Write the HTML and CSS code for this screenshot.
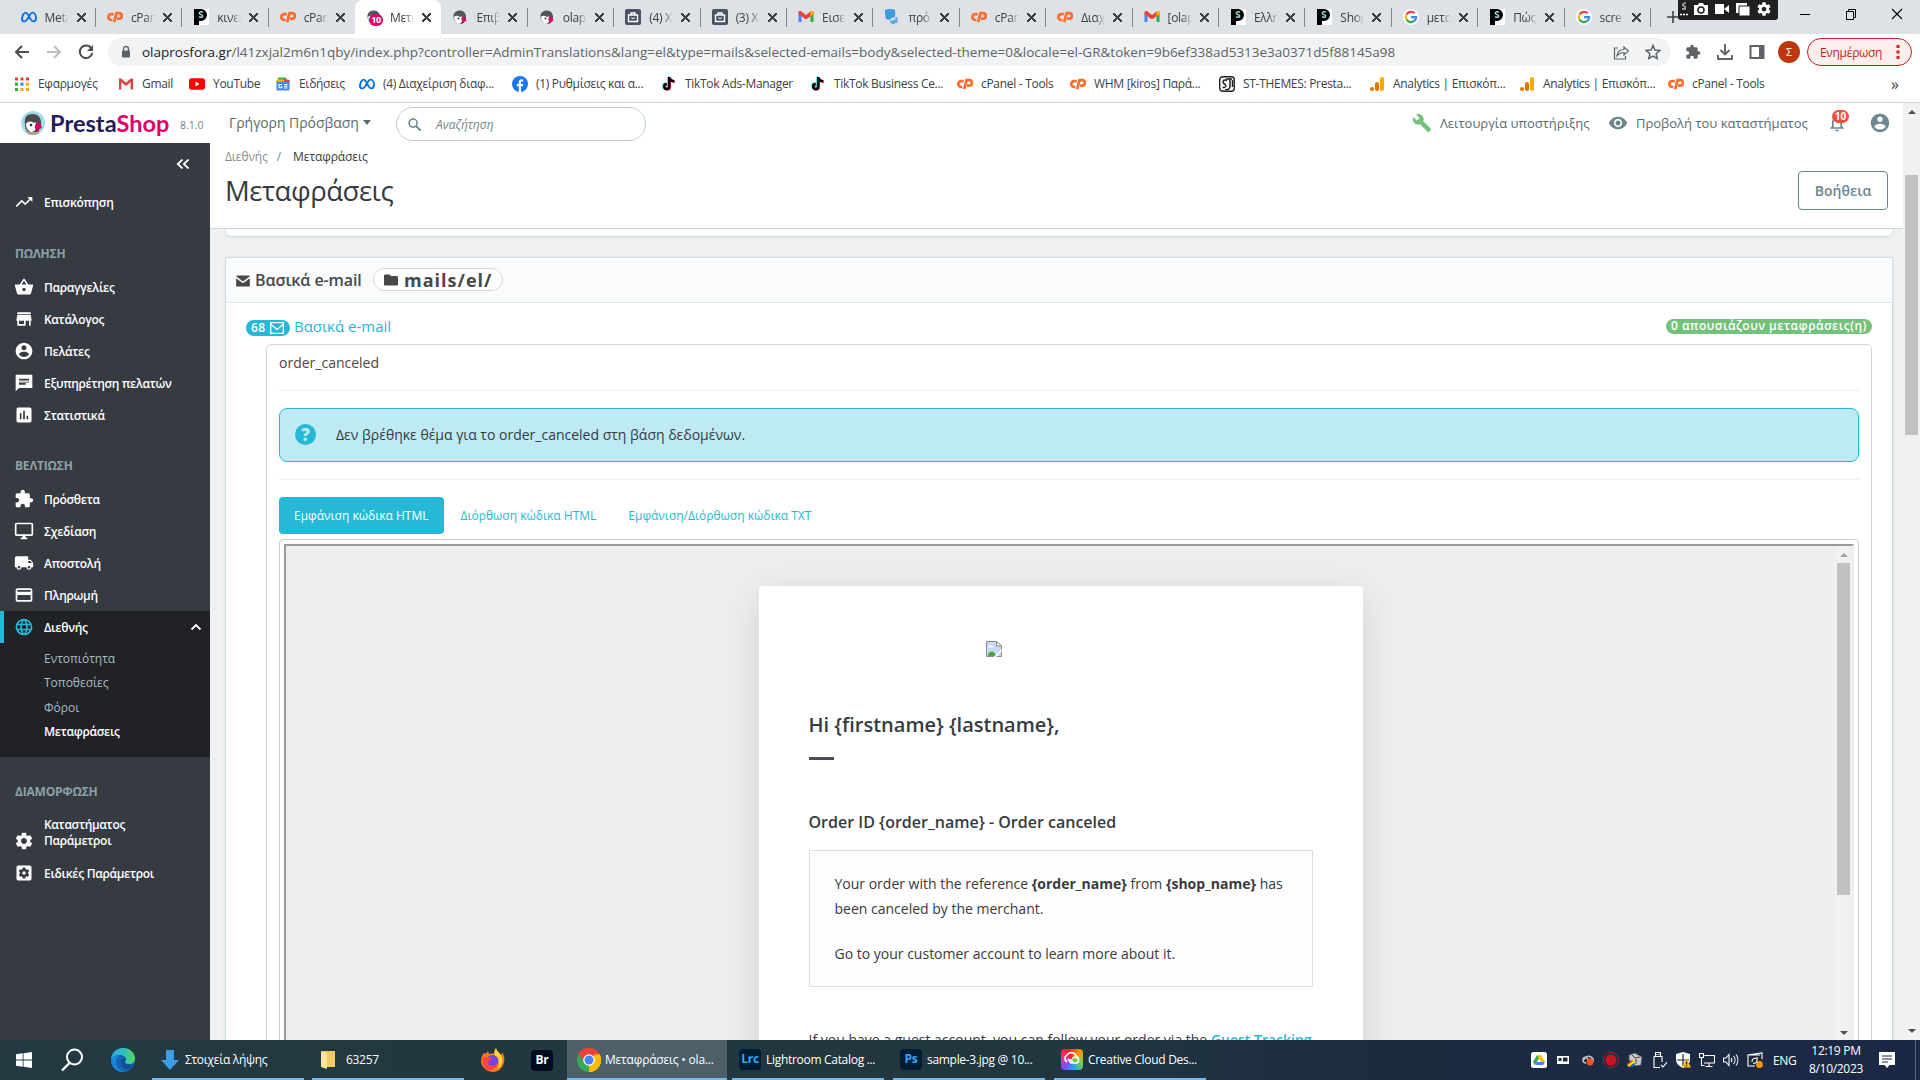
FILE: index.html
```html
<!DOCTYPE html>
<html lang="el">
<head>
  <meta charset="utf-8" />
  <title>Μεταφράσεις • olaprosfora</title>
  <link rel="stylesheet" href="styles.css">
</head>
<body>
  <!-- icon sprite -->
  <svg class="sprite" width="0" height="0">
    <symbol id="i-meta" viewBox="0 0 16 16"><path d="M1 10.5C1 7 2.6 3.6 4.7 3.6c3 0 4 8.8 7.6 8.8 1.8 0 2.7-1.3 2.7-3.3 0-3-1.500-5.500-3.500-5.500C8.200 3.600 7.300 12.400 3.200 12.400 1.700 12.400 1 11.500 1 10.500z" fill="none" stroke="#0a72ea" stroke-width="1.900"/></symbol>
    <symbol id="i-cp" viewBox="0 0 16 16"><path d="M6.800 5.200H4.200a2.900 2.900 0 0 0 0 5.800H5.400M7.200 13.200L9.500 4.200h2.700a2.700 2.700 0 0 1 0 5.400H10" fill="none" stroke="#ff6c2c" stroke-width="2.700"/></symbol>
    <symbol id="i-p" viewBox="0 0 16 16"><path d="M1 0h15v16H1z" fill="#fff"/><path d="M1 0h7a6 6 0 0 1 0 12H6v4H1z" fill="#000"/><path d="M10 3.200C8 2 6 3 6.300 4.400c.4 1.500 3.200 1 3.300 2.600.1 1.500-2.200 1.800-3.600.7" fill="none" stroke="#9fdfe8" stroke-width="1.500"/></symbol>
    <symbol id="i-presta" viewBox="0 0 24 24"><circle cx="12" cy="12" r="12" fill="#a4dbe8"/><path d="M5 20h14l-2 3a12 12 0 0 1-10 0z" fill="#b3a08c"/><path d="M4 13C3 6 6 3 12 3s9 5 8 13l-3 5H8c-3-1-4-4-4-8z" fill="#4b4a4d"/><path d="M5 13c2-3 5-3 8-1 2-1 3 0 3 2-1 5-3 7-6 7-3-1-5-4-5-8z" fill="#fff"/><circle cx="10" cy="14" r="1.300" fill="#333"/><path d="M15 12c3-1 5 1 6 5l-3 1-2 2c-2-2-3-4-1-8z" fill="#df0067"/></symbol>
    <symbol id="i-bird" viewBox="0 0 16 16"><path d="M1.500 8C1 4 4 1.500 8 1.500s6 3 6 7c0 3-2 6-5 6.500-4 0-7-3-7.500-7z" fill="#555458"/><path d="M2 8c2-2 4-1 6 0 2-1 3 0 3 2-1 2-2 5-4 5-3-1-5-4-5-7z" fill="#fff"/><circle cx="6.500" cy="9.500" r="1" fill="#333"/><path d="M10 8c2-1 4 1 4.500 3.500l-2 1L11 14c-1.500-2-2-4-1-6z" fill="#df0067"/></symbol>
    <symbol id="i-case" viewBox="0 0 16 16"><rect width="16" height="16" rx="2" fill="#4a5263"/><path d="M3.500 6h9v6.500h-9zM6 6V4h4v2" fill="none" stroke="#fff" stroke-width="1.400"/><path d="M6 8.500c1 1.300 3 1.300 4 0" fill="none" stroke="#fff"/></symbol>
    <symbol id="i-gmail" viewBox="0 0 16 16"><path d="M.5 3.500V13h3V7z" fill="#4285f4"/><path d="M15.500 3.500V13h-3V7z" fill="#34a853"/><path d="M.5 3.500C.5 2 2.500 1.700 3.500 2.500L8 6l4.500-3.500c1-.8 3-.5 3 1V5L8 10.500.5 5z" fill="#ea4335"/><path d="M12.500 2.500c1-.8 3-.5 3 1V5l-3 2.200z" fill="#fbbc04"/></symbol>
    <symbol id="i-gmail-old" viewBox="0 0 16 16"><path d="M1 2.500h14v11H1z" fill="#f2f2f2"/><path d="M1 2.500h2l5 4.300 5-4.300h2v11h-2.300V6L8 10 3.300 6v7.500H1z" fill="#d9453a"/></symbol>
    <symbol id="i-mastodon" viewBox="0 0 16 16"><path d="M1 1c3-1.300 8-1.300 10 0 .6 3 .3 6-.3 7-.8.800-2.700.900-3.700 1v1.500c-1 .2-4.400.2-5-.8C1.200 7.500.8 4 1 1z" fill="#3f9ae0"/><path d="M5 11.500c3 .5 5-.3 6.500-1.500V8h2v6l-1.500-.5C11 15 9 16 8 15" fill="#5fa9e0"/></symbol>
    <symbol id="i-google" viewBox="0 0 16 16"><circle cx="8" cy="8" r="8" fill="#fff"/><path d="M3.500 5.500A5.100 5.100 0 0 1 11.700 4.300" fill="none" stroke="#ea4335" stroke-width="2.200"/><path d="M3.500 5.500a5.200 5.200 0 0 0 0 5" fill="none" stroke="#fbbc04" stroke-width="2.200"/><path d="M3.500 10.500a5.100 5.100 0 0 0 7.900 1.300" fill="none" stroke="#34a853" stroke-width="2.200"/><path d="M8 8.200h5.100c0 1.500-.6 2.700-1.700 3.600" fill="none" stroke="#4285f4" stroke-width="2.200"/></symbol>
    <symbol id="i-apps" viewBox="0 0 16 16"><path d="M1 1.500h3v3H1zM6.500 1.500h3v3h-3zM12 1.500h3v3h-3z" fill="#e33e2b"/><path d="M1 6.700h3v3H1z" fill="#2da94f"/><path d="M6.500 6.700h3v3h-3z" fill="#3b80ee"/><path d="M12 6.700h3v3h-3zM6.500 12h3v3h-3zM12 12h3v3h-3z" fill="#f5a911"/><path d="M1 12h3v3H1z" fill="#2da94f"/></symbol>
    <symbol id="i-yt" viewBox="0 0 16 16"><rect y="2.300" width="16" height="11.400" rx="2.600" fill="#f00"/><path d="M6.500 5.500v5l4-2.500z" fill="#fff"/></symbol>
    <symbol id="i-news" viewBox="0 0 16 16"><path d="M3 1.500h8l1 5H3z" fill="#34a853"/><path d="M9 3l6 1-1 4H9z" fill="#ea4335"/><path d="M1 3.500h8v3H1z" fill="#fbbc04"/><rect x="1.500" y="5.500" width="13" height="9" rx="1" fill="#4285f4"/><path d="M7 8.600H4v3.200h2.800v-1.500M9 8.500h3.500M9 10.300h3.500M9 12h3.500" fill="none" stroke="#fff" stroke-width="1.100"/></symbol>
    <symbol id="i-fb" viewBox="0 0 16 16"><circle cx="8" cy="8" r="8" fill="#1877f2"/><path d="M6.800 16v-5.800H4.900V7.900h1.900V6.300c0-2 1.100-3 2.800-3l1.600.1v2h-1c-1 0-1.200.5-1.200 1.200v1.300h2.200l-.4 2.300H9V16z" fill="#fff"/></symbol>
    <symbol id="i-tiktok" viewBox="0 0 16 16"><path d="M8 1v9.500A2.500 2.500 0 1 1 5.500 8M8 1.500C8.500 4 10.500 5 13 5.200" fill="none" stroke="#25f4ee" stroke-width="2.400" transform="translate(-.7 -.5)"/><path d="M8.500 1v9.500A2.500 2.500 0 1 1 6 8M8.500 1.500C9 4 11 5 13.500 5.200" fill="none" stroke="#fe2c55" stroke-width="2.400" transform="translate(.4 .6)"/><path d="M8.200 1v9.500A2.500 2.500 0 1 1 5.700 8M8.200 1.500C8.700 4 10.700 5 13.200 5.200" fill="none" stroke="#000" stroke-width="2.400"/></symbol>
    <symbol id="i-st" viewBox="0 0 16 16"><rect x=".7" y=".7" width="14.600" height="14.600" rx="3" fill="#fff" stroke="#222" stroke-width="1.400"/><path d="M8 4.500C4 3 3 6.500 5.500 8s1.500 4-2 3.500M7 3h6M11 3v7c0 3-2 4-5 3.500M13.500 4v7" fill="none" stroke="#222" stroke-width="1.500"/></symbol>
    <symbol id="i-analytics" viewBox="0 0 16 16"><rect x="11" y="1" width="4" height="14" rx="2" fill="#f9ab00"/><rect x="6" y="6" width="4" height="9" rx="2" fill="#e37400"/><circle cx="3" cy="13" r="2" fill="#e37400"/></symbol>
    <symbol id="i-mail" viewBox="0 0 16 14"><path d="M0 1.500C0 .7.700.5 1.300.5h13.400c.8 0 1.300.4 1.300 1L8.700 7c-.5.400-.9.400-1.400 0zM0 3.700l6.600 5c.9.700 1.900.7 2.800 0l6.600-5v8.800c0 .7-.5 1-1.200 1H1.200c-.7 0-1.200-.3-1.200-1z" fill="currentColor"/></symbol>

    <symbol id="m-trend" viewBox="0 0 24 24"><path d="M16 6l2.290 2.290-4.880 4.880-4-4L2 16.590 3.410 18l6-6 4 4 6.300-6.290L22 12V6z"/></symbol>
    <symbol id="m-basket" viewBox="0 0 24 24"><path d="M17.210 9l-4.380-6.560c-.19-.28-.51-.42-.83-.42s-.64.140-.83.430L6.790 9H2c-.55 0-1 .45-1 1 0 .09.010.18.040.27l2.540 9.270c.23.840 1 1.460 1.920 1.460h13c.92 0 1.690-.62 1.930-1.460l2.540-9.270L23 10c0-.55-.45-1-1-1h-4.790zM9 9l3-4.400L15 9H9zm3 8c-1.100 0-2-.9-2-2s.9-2 2-2 2 .9 2 2-.9 2-2 2z"/></symbol>
    <symbol id="m-store" viewBox="0 0 24 24"><path d="M20 4H4v2h16V4zm1 10v-2l-1-5H4l-1 5v2h1v6h10v-6h4v6h2v-6h1zm-9 4H6v-4h6v4z"/></symbol>
    <symbol id="m-account" viewBox="0 0 24 24"><path d="M12 2C6.480 2 2 6.480 2 12s4.480 10 10 10 10-4.480 10-10S17.520 2 12 2zm0 3c1.660 0 3 1.340 3 3s-1.340 3-3 3-3-1.340-3-3 1.340-3 3-3zm0 14.200c-2.500 0-4.710-1.280-6-3.220.03-1.990 4-3.080 6-3.080 1.990 0 5.970 1.090 6 3.080-1.290 1.940-3.500 3.220-6 3.220z"/></symbol>
    <symbol id="m-chat" viewBox="0 0 24 24"><path d="M22 2H2v20l4-4h16V2zM6 7h12v2H6V7zm8 7H6v-2h8v2zm4-2.500H6v-1h12v1z"/></symbol>
    <symbol id="m-stats" viewBox="0 0 24 24"><path d="M19 3H5c-1.100 0-2 .9-2 2v14c0 1.100.9 2 2 2h14c1.100 0 2-.9 2-2V5c0-1.100-.9-2-2-2zM9 17H7v-7h2v7zm4 0h-2V7h2v10zm4 0h-2v-4h2v4z"/></symbol>
    <symbol id="m-ext" viewBox="0 0 24 24"><path d="M20.500 11H19V7c0-1.100-.9-2-2-2h-4V3.500C13 2.120 11.880 1 10.500 1S8 2.120 8 3.500V5H4c-1.100 0-1.990.9-1.990 2v3.800H3.500c1.490 0 2.700 1.210 2.700 2.700s-1.210 2.700-2.700 2.700H2V20c0 1.100.9 2 2 2h3.800v-1.500c0-1.490 1.210-2.700 2.700-2.700 1.490 0 2.700 1.210 2.700 2.700V22H17c1.100 0 2-.9 2-2v-4h1.500c1.380 0 2.500-1.120 2.500-2.500S21.880 11 20.500 11z"/></symbol>
    <symbol id="m-desktop" viewBox="0 0 24 24"><path d="M21 2H3c-1.100 0-2 .9-2 2v12c0 1.100.9 2 2 2h7v2H8v2h8v-2h-2v-2h7c1.100 0 2-.9 2-2V4c0-1.100-.9-2-2-2zm0 14H3V4h18v12z"/></symbol>
    <symbol id="m-truck" viewBox="0 0 24 24"><path d="M20 8h-3V4H3c-1.100 0-2 .9-2 2v11h2c0 1.660 1.340 3 3 3s3-1.340 3-3h6c0 1.660 1.340 3 3 3s3-1.340 3-3h2v-5l-3-4zM6 18.500c-.83 0-1.500-.67-1.500-1.500s.67-1.500 1.500-1.500 1.500.67 1.500 1.500-.67 1.500-1.500 1.500zm13.500-9l1.960 2.500H17V9.500h2.500zm-1.500 9c-.83 0-1.500-.67-1.500-1.500s.67-1.500 1.500-1.500 1.500.67 1.500 1.500-.67 1.500-1.500 1.500z"/></symbol>
    <symbol id="m-card" viewBox="0 0 24 24"><path d="M20 4H4c-1.110 0-1.990.89-1.990 2L2 18c0 1.110.89 2 2 2h16c1.110 0 2-.89 2-2V6c0-1.110-.89-2-2-2zm0 14H4v-6h16v6zm0-10H4V6h16v2z"/></symbol>
    <symbol id="m-globe" viewBox="0 0 24 24"><path d="M11.990 2C6.470 2 2 6.480 2 12s4.470 10 9.990 10C17.520 22 22 17.520 22 12S17.520 2 11.990 2zm6.930 6h-2.950c-.32-1.250-.78-2.450-1.380-3.560 1.840.63 3.370 1.910 4.330 3.560zM12 4.040c.83 1.200 1.480 2.530 1.910 3.960h-3.820c.43-1.430 1.080-2.760 1.910-3.960zM4.260 14C4.100 13.360 4 12.690 4 12s.1-1.360.26-2h3.380c-.08.660-.14 1.320-.14 2 0 .68.060 1.340.14 2H4.260zm.82 2h2.950c.32 1.250.78 2.450 1.380 3.560-1.840-.63-3.370-1.900-4.330-3.560zm2.950-8H5.080c.96-1.660 2.490-2.930 4.330-3.560C8.810 5.550 8.350 6.750 8.030 8zM12 19.960c-.83-1.200-1.480-2.530-1.910-3.960h3.820c-.43 1.430-1.080 2.760-1.910 3.960zM14.340 14H9.660c-.09-.66-.16-1.320-.16-2 0-.68.070-1.350.16-2h4.680c.09.650.16 1.320.16 2 0 .68-.07 1.340-.16 2zm.25 5.560c.6-1.110 1.060-2.310 1.380-3.560h2.950c-.96 1.650-2.490 2.930-4.330 3.560zM16.360 14c.08-.66.140-1.320.14-2 0-.68-.06-1.340-.14-2h3.380c.16.640.26 1.310.26 2s-.1 1.360-.26 2h-3.380z"/></symbol>
    <symbol id="m-gear" viewBox="0 0 24 24"><path d="M19.430 12.980c.04-.32.07-.64.07-.98s-.03-.66-.07-.98l2.110-1.650c.19-.15.24-.42.12-.64l-2-3.460c-.12-.22-.39-.3-.61-.22l-2.490 1c-.52-.4-1.080-.73-1.690-.98l-.38-2.650C14.460 2.180 14.250 2 14 2h-4c-.25 0-.46.18-.49.42l-.38 2.650c-.61.25-1.170.59-1.690.98l-2.490-1c-.23-.09-.49 0-.61.22l-2 3.460c-.13.22-.07.49.12.64l2.110 1.650c-.04.32-.07.65-.07.98s.03.66.07.98l-2.110 1.650c-.19.150-.24.42-.12.640l2 3.460c.12.220.39.300.61.220l2.490-1c.52.400 1.080.730 1.690.980l.38 2.650c.03.240.24.420.49.420h4c.25 0 .46-.18.49-.42l.38-2.650c.61-.25 1.170-.59 1.690-.98l2.490 1c.23.090.49 0 .61-.22l2-3.460c.12-.22.07-.49-.12-.64l-2.110-1.650zM12 15.500c-1.930 0-3.500-1.570-3.500-3.500s1.570-3.500 3.500-3.500 3.500 1.570 3.500 3.500-1.570 3.500-3.500 3.500z"/></symbol>
    <symbol id="m-apps-gear" viewBox="0 0 24 24"><path fill-rule="evenodd" d="M5 3h14a2 2 0 0 1 2 2v14a2 2 0 0 1-2 2H5a2 2 0 0 1-2-2V5c0-1.100.9-2 2-2zM10.500 5.500l-.3 1.700-1.300.8-1.700-.6-1.500 2.500L7 11v2l-1.300 1.100 1.500 2.500 1.700-.6 1.300.8.300 1.700h3l.3-1.700 1.300-.8 1.700.6 1.500-2.500L17 13v-2l1.300-1.100-1.500-2.500-1.700.6-1.300-.8-.3-1.700zM12 10a2 2 0 1 1 0 4 2 2 0 0 1 0-4z"/></symbol>
    <symbol id="m-wrench" viewBox="0 0 24 24"><path d="M22.700 19l-9.100-9.100c.9-2.300.4-5-1.500-6.900-2-2-5-2.400-7.400-1.300L9 6 6 9 1.600 4.700C.4 7.100.9 10.100 2.900 12.100c1.900 1.900 4.600 2.400 6.900 1.500l9.100 9.100c.4.400 1 .4 1.400 0l2.300-2.300c.5-.4.500-1.100.1-1.400z"/></symbol>
    <symbol id="m-eye" viewBox="0 0 24 24"><path d="M12 4.500C7 4.500 2.730 7.610 1 12c1.730 4.390 6 7.500 11 7.500s9.270-3.110 11-7.500c-1.730-4.390-6-7.500-11-7.500zM12 17c-2.760 0-5-2.240-5-5s2.240-5 5-5 5 2.240 5 5-2.240 5-5 5zm0-8c-1.660 0-3 1.340-3 3s1.340 3 3 3 3-1.340 3-3-1.340-3-3-3z"/></symbol>
    <symbol id="m-bell" viewBox="0 0 24 24"><path d="M12 22c1.100 0 2-.9 2-2h-4c0 1.100.9 2 2 2zm6-6v-5c0-3.070-1.630-5.640-4.500-6.320V4c0-.83-.67-1.500-1.500-1.500s-1.500.67-1.500 1.500v.68C7.640 5.360 6 7.920 6 11v5l-2 2v1h16v-1l-2-2zm-2 1H8v-6c0-2.480 1.510-4.500 4-4.500s4 2.020 4 4.500v6z"/></symbol>
  </svg>

  <!-- browser tabs -->
  <div class="tabstrip">
    <div class="tab"><svg class="fav"><use href="#i-meta"/></svg><span>Meta</span><b></b></div>
    <div class="tab"><svg class="fav"><use href="#i-cp"/></svg><span>cPan</span><b></b></div>
    <div class="tab"><svg class="fav"><use href="#i-p"/></svg><span>κινεί</span><b></b></div>
    <div class="tab no-sep"><svg class="fav"><use href="#i-cp"/></svg><span>cPan</span><b></b></div>
    <div class="tab active"><svg class="fav"><use href="#i-bird"/></svg><i class="fav-count">10</i><span>Μετα</span><b></b></div>
    <div class="tab"><svg class="fav"><use href="#i-bird"/></svg><span>Επιβ</span><b></b></div>
    <div class="tab"><svg class="fav"><use href="#i-bird"/></svg><span>olap</span><b></b></div>
    <div class="tab"><svg class="fav"><use href="#i-case"/></svg><span>(4) X</span><b></b></div>
    <div class="tab"><svg class="fav"><use href="#i-case"/></svg><span>(3) X</span><b></b></div>
    <div class="tab"><svg class="fav"><use href="#i-gmail"/></svg><span>Εισε</span><b></b></div>
    <div class="tab"><svg class="fav"><use href="#i-mastodon"/></svg><span>πρό</span><b></b></div>
    <div class="tab"><svg class="fav"><use href="#i-cp"/></svg><span>cPan</span><b></b></div>
    <div class="tab"><svg class="fav"><use href="#i-cp"/></svg><span>Διαχ</span><b></b></div>
    <div class="tab"><svg class="fav"><use href="#i-gmail"/></svg><span>[olap</span><b></b></div>
    <div class="tab"><svg class="fav"><use href="#i-p"/></svg><span>Ελλη</span><b></b></div>
    <div class="tab"><svg class="fav"><use href="#i-p"/></svg><span>Shop</span><b></b></div>
    <div class="tab"><svg class="fav"><use href="#i-google"/></svg><span>μετα</span><b></b></div>
    <div class="tab"><svg class="fav"><use href="#i-p"/></svg><span>Πώς</span><b></b></div>
    <div class="tab"><svg class="fav"><use href="#i-google"/></svg><span>scre</span><b></b></div>
    <svg class="new-tab" viewBox="0 0 12 12"><path d="M6 0v12M0 6h12" stroke="#3c4043" stroke-width="1.600"/></svg>
    <div class="win-controls">
      <svg viewBox="0 0 12 12"><path d="M1 6.500h10" stroke="#000"/></svg>
      <svg viewBox="0 0 12 12"><path d="M1.500 3.500h7v8h-7zM3.500 3.500v-2h7v8h-2" fill="none" stroke="#000"/></svg>
      <svg viewBox="0 0 12 12"><path d="M1 1l10 10M11 1L1 11" stroke="#000" stroke-width="1.100"/></svg>
    </div>
  </div>
  <!-- screen recorder -->
  <div class="recorder">
    <svg class="grip" viewBox="0 0 8 16"><path d="M6 2c-4 0-4 3-2 3s2 3-2 3h4" stroke="#aaa" stroke-width="1.500" fill="none"/><path d="M0 13.500h2M3 13.500h2M6 13.500h2" stroke="#fff" stroke-width="1.500"/></svg>
    <svg viewBox="0 0 16 16"><path d="M1 4h4l1-2h4l1 2h4v10H1z" fill="#fff"/><circle cx="8" cy="9" r="3" fill="#fff" stroke="#222" stroke-width="1.500"/></svg>
    <svg viewBox="0 0 16 16"><path d="M1 3h9v10H1zM10 8l5-4v8z" fill="#fff"/></svg>
    <svg viewBox="0 0 16 16"><path d="M1 2h11v10H1z" fill="#fff"/><path d="M4 5h11v10H4z" fill="#fff" stroke="#222"/></svg>
    <svg viewBox="0 0 24 24" fill="#fff"><use href="#m-gear"/></svg>
  </div>

  <!-- address bar -->
  <div class="toolbar">
    <div class="nav-btns">
      <svg viewBox="0 0 16 16"><path d="M15 8H2M8 2L2 8l6 6" fill="none" stroke="#4a4d51" stroke-width="2"/></svg>
      <svg viewBox="0 0 16 16"><path d="M1 8h13M8 2l6 6-6 6" fill="none" stroke="#bbbdc0" stroke-width="2"/></svg>
      <svg viewBox="0 0 16 16"><path d="M13.500 4.500A6.300 6.300 0 1 0 14.300 9" fill="none" stroke="#4a4d51" stroke-width="2"/><path d="M15 1v6H9z" fill="#4a4d51"/></svg>
    </div>
    <div class="omnibox">
      <svg class="lock" viewBox="0 0 10 14"><path d="M2.500 6V4a2.500 2.500 0 0 1 5 0v2" fill="none" stroke="#5f6368" stroke-width="1.400"/><rect x="1" y="5.500" width="8" height="7" rx="1" fill="#5f6368"/></svg>
      <span class="url"><em>olaprosfora.gr</em>/l41zxjal2m6n1qby/index.php?controller=AdminTranslations&amp;lang=el&amp;type=mails&amp;selected-emails=body&amp;selected-theme=0&amp;locale=el-GR&amp;token=9b6ef338ad5313e3a0371d5f88145a98</span>
      <svg class="omni-ic" viewBox="0 0 16 16"><path d="M5 4H1.500v11h11v-3M4 11.500C5 7 8 5.500 11 5.500V3l4.500 4L11 11V8.500C8 8.500 6 9.500 4 11.500z" fill="none" stroke="#5f6368" stroke-width="1.200"/></svg>
      <svg class="omni-ic" viewBox="0 0 16 16"><path d="M8 1.500l1.900 4.600 4.900.4-3.700 3.200 1.100 4.800L8 12l-4.200 2.500 1.100-4.800L1.200 6.500l4.900-.4z" fill="none" stroke="#5f6368" stroke-width="1.500"/></svg>
    </div>
    <div class="tool-icons">
      <svg viewBox="0 0 24 24" fill="#5f6368"><use href="#m-ext"/></svg>
      <svg viewBox="0 0 16 16"><path d="M8 0v10M3.500 6L8 10.500 12.500 6M1 11v4h14v-4" fill="none" stroke="#5f6368" stroke-width="1.900"/></svg>
      <svg viewBox="0 0 16 16"><path d="M1.500 2h13v12h-13z" fill="none" stroke="#5f6368" stroke-width="2"/><path d="M10 2h5v12h-5z" fill="#5f6368"/></svg>
    </div>
    <span class="avatar">Σ</span>
    <span class="update-pill">Ενημέρωση<svg viewBox="0 0 4 14"><path d="M.5 0h3v3h-3zM.5 5.500h3v3h-3zM.5 11h3v3h-3z" fill="#c5221f"/></svg></span>
  </div>

  <!-- bookmarks -->
  <div class="bookmarks">
    <a><svg class="fav"><use href="#i-apps"/></svg>Εφαρμογές</a>
    <a><svg class="fav"><use href="#i-gmail-old"/></svg>Gmail</a>
    <a><svg class="fav"><use href="#i-yt"/></svg>YouTube</a>
    <a><svg class="fav"><use href="#i-news"/></svg>Ειδήσεις</a>
    <a><svg class="fav"><use href="#i-meta"/></svg>(4) Διαχείριση διαφ...</a>
    <a><svg class="fav"><use href="#i-fb"/></svg>(1) Ρυθμίσεις και α...</a>
    <a><svg class="fav"><use href="#i-tiktok"/></svg>TikTok Ads-Manager</a>
    <a><svg class="fav"><use href="#i-tiktok"/></svg>TikTok Business Ce...</a>
    <a><svg class="fav"><use href="#i-cp"/></svg>cPanel - Tools</a>
    <a><svg class="fav"><use href="#i-cp"/></svg>WHM [kiros] Παρά...</a>
    <a><svg class="fav"><use href="#i-st"/></svg>ST-THEMES: Presta...</a>
    <a><svg class="fav"><use href="#i-analytics"/></svg>Analytics | Επισκόπ...</a>
    <a><svg class="fav"><use href="#i-analytics"/></svg>Analytics | Επισκόπ...</a>
    <a><svg class="fav"><use href="#i-cp"/></svg>cPanel - Tools</a>
    <span class="more">»</span>
  </div>

  <div class="viewport">
    <div class="page">
      <header class="ps-header">
        <svg class="ps-logo"><use href="#i-presta"/></svg>
        <span class="ps-name">Presta<em>Shop</em></span>
        <span class="ps-version">8.1.0</span>
        <span class="quick">Γρήγορη Πρόσβαση</span>
        <div class="search">
          <svg viewBox="0 0 16 16"><circle cx="6.500" cy="6.500" r="4.300" fill="none" stroke="#6c868e" stroke-width="1.700"/><path d="M9.600 9.600l5 5" stroke="#6c868e" stroke-width="2"/></svg>
          <span>Αναζήτηση</span>
        </div>
        <div class="header-right">
          <svg class="wrench"><use href="#m-wrench"/></svg>
          <span class="debug">Λειτουργία υποστήριξης</span>
          <svg class="eye"><use href="#m-eye"/></svg>
          <span class="view-shop">Προβολή του καταστήματος</span>
          <div class="notif"><svg><use href="#m-bell"/></svg><b>10</b></div>
          <svg class="account"><use href="#m-account"/></svg>
        </div>
      </header>

      <div class="ps-body">
        <nav class="sidebar">
          <div class="collapse"><svg viewBox="0 0 14 10"><path d="M6.500.5L1.800 5l4.700 4.500M12.500.5L7.800 5l4.700 4.500" fill="none" stroke="#fff" stroke-width="1.800"/></svg></div>
          <a class="item first"><svg><use href="#m-trend"/></svg>Επισκόπηση</a>
          <h4>ΠΩΛΗΣΗ</h4>
          <a class="item"><svg><use href="#m-basket"/></svg>Παραγγελίες</a>
          <a class="item"><svg><use href="#m-store"/></svg>Κατάλογος</a>
          <a class="item"><svg><use href="#m-account"/></svg>Πελάτες</a>
          <a class="item"><svg><use href="#m-chat"/></svg>Εξυπηρέτηση πελατών</a>
          <a class="item"><svg><use href="#m-stats"/></svg>Στατιστικά</a>
          <h4>ΒΕΛΤΙΩΣΗ</h4>
          <a class="item"><svg><use href="#m-ext"/></svg>Πρόσθετα</a>
          <a class="item"><svg><use href="#m-desktop"/></svg>Σχεδίαση</a>
          <a class="item"><svg><use href="#m-truck"/></svg>Αποστολή</a>
          <a class="item"><svg><use href="#m-card"/></svg>Πληρωμή</a>
          <div class="open">
            <a class="item current"><svg><use href="#m-globe"/></svg>Διεθνής<svg class="chev" viewBox="0 0 12 8"><path d="M1.500 6.500L6 2l4.500 4.500" fill="none" stroke="#fff" stroke-width="1.800"/></svg></a>
            <ul>
              <li>Εντοπιότητα</li>
              <li>Τοποθεσίες</li>
              <li>Φόροι</li>
              <li class="on">Μεταφράσεις</li>
            </ul>
          </div>
          <h4>ΔΙΑΜΟΡΦΩΣΗ</h4>
          <a class="item two"><svg><use href="#m-gear"/></svg><span>Καταστήματος<br>Παράμετροι</span></a>
          <a class="item"><svg><use href="#m-apps-gear"/></svg>Ειδικές Παράμετροι</a>
        </nav>

        <main class="main">
          <div class="page-head">
            <div>
              <div class="crumbs"><span>Διεθνής</span><i>/</i>Μεταφράσεις</div>
              <h1>Μεταφράσεις</h1>
            </div>
            <button class="help">Βοήθεια</button>
          </div>
          <div class="content">
            <div class="prev-card"></div>
            <div class="card">
              <div class="card-head">
                <svg class="env"><use href="#i-mail"/></svg>
                <span class="card-title">Βασικά e-mail</span>
                <span class="path"><svg viewBox="0 0 14 12"><path d="M0 2C0 1 .5.5 1.500.5H5c1 0 1.400.5 1.500 1.500h6c1 0 1.500.5 1.500 1.500V10c0 1-.5 1.500-1.500 1.500h-11C.5 11.500 0 11 0 10z" fill="#484848"/></svg>mails/el/</span>
              </div>
              <div class="card-body">
                <div class="mail-row">
                  <span class="count">68<svg viewBox="0 0 14 12"><path d="M.7.7h12.600v10.600H.7z" fill="none" stroke="#fff" stroke-width="1.300"/><path d="M1 2.500l6 5 6-5" fill="none" stroke="#fff" stroke-width="1.300"/></svg></span>
                  <a>Βασικά e-mail</a>
                  <span class="missing">0 απουσιάζουν μεταφράσεις(η)</span>
                </div>
                <div class="panel">
                  <p class="mail-name">order_canceled</p>
                  <div class="alert"><span class="q">?</span>Δεν βρέθηκε θέμα για το order_canceled στη βάση δεδομένων.</div>
                  <div class="pills">
                    <a class="on">Εμφάνιση κώδικα HTML</a>
                    <a>Διόρθωση κώδικα HTML</a>
                    <a>Εμφάνιση/Διόρθωση κώδικα TXT</a>
                  </div>
                  <div class="frame-wrap">
                    <div class="frame">
                      <div class="email-bg">
                        <div class="email">
                          <svg class="broken" viewBox="0 0 16 16"><path d="M.5.500h10L15.500 5v10.500H.5z" fill="#c6d9f7" stroke="#8d8d8d"/><path d="M10.500.5V5h5z" fill="#fff" stroke="#8d8d8d"/><path d="M2.500 6c0-2 2.500-3 3.500-1 1.500-.5 2 1 1 1.500H3z" fill="#fff"/><path d="M2 15c0-6 7-6 8 0z" fill="#4ca52f"/><path d="M16 8v2l-6 6H7.500z" fill="#fff"/></svg>
                          <h2>Hi {firstname} {lastname},</h2>
                          <div class="dash"></div>
                          <h3>Order ID {order_name} - Order canceled</h3>
                          <div class="box">
                            <p>Your order with the reference <strong>{order_name}</strong> from <strong>{shop_name}</strong> has<br>been canceled by the merchant.</p>
                            <p>Go to your customer account to learn more about it.</p>
                          </div>
                          <p class="guest">If you have a guest account, you can follow your order via the <a>Guest Tracking</a></p>
                        </div>
                      </div>
                      <div class="scroll inner"><i class="up"></i><div class="thumb"></div><i class="down"></i></div>
                    </div>
                  </div>
                </div>
              </div>
            </div>
          </div>
        </main>
      </div>
    </div>
    <div class="scroll"><i class="up"></i><div class="thumb"></div><i class="down"></i></div>
  </div>

  <!-- windows taskbar -->
  <div class="taskbar">
    <svg class="start" viewBox="0 0 16 16"><path d="M0 2.300l6.700-1v6.300H0zM7.500 1.200L16 0v7.600H7.500zM0 8.400h6.700v6.300L0 13.700zM7.500 8.400H16V16l-8.500-1.200z" fill="#fff"/></svg>
    <svg class="find" viewBox="0 0 24 24"><circle cx="14.500" cy="9" r="7.500" fill="none" stroke="#fff" stroke-width="2"/><path d="M9.500 15L2 22.500" stroke="#fff" stroke-width="2.400"/></svg>
    <svg class="edge" viewBox="0 0 24 24"><defs><linearGradient id="eg" x1="0" x2="1"><stop offset="0" stop-color="#2aa7e8"/><stop offset=".6" stop-color="#2fc4b5"/><stop offset="1" stop-color="#5fd94f"/></linearGradient></defs><circle cx="12" cy="12" r="12" fill="#1464b4"/><path d="M0 12C0 5 5 0 12 0s12 5 12 10c0 4-3 6-6 6s-4-1-4-2c0-1 1-1 1-3 0-2-3-4-6-4C4 7 0 10 0 12z" fill="url(#eg)"/><path d="M0 12c0-3 4-5 8-4-3 2-4 6-2 10s5 5 8 5.700C6 25 0 19 0 12z" fill="#1a86da"/><path d="M14 14c0 1 1 3 5 3 2 0 3.500-.5 4-1-1 3-4 5-7 5-5 0-8-5-5-10l4-1c0 2-1 3-1 4z" fill="#124b95"/></svg>
    <div class="task dl"><svg viewBox="0 0 20 20"><path d="M6 0h8v10h5l-9 10-9-10h5z" fill="#3c9ce8"/></svg>Στοιχεία λήψης</div>
    <div class="task fold"><svg viewBox="0 0 20 20"><path d="M3 1h13v16H7z" fill="#f1ca63"/><path d="M2 1l6 2v16l-6-2z" fill="#fbe49c"/></svg>63257</div>
    <svg class="firefox" viewBox="0 0 24 24"><path d="M3 5l2 1 2-3 1 3c2-1 4-1 5 0 0-2 0-4 2-6 1 4 3 4 5 7 1-1 1-2 1-3 2 3 3 6 2 10-1 6-6 10-11 10S1 20 0 14c0-4 1-7 3-9z" fill="#ff7a1c"/><path d="M15 0c1 4 3 4 5 7 3 6 1 12-4 14 3-5 2-9-3-15z" fill="#ffd23f"/><circle cx="11.500" cy="13" r="6" fill="#7a45d6"/><path d="M2 9c3 0 6 1 9 1-1 3-4 2-4 5s6 4 9 1c-1 4-4 6-8 6s-7-5-6-13z" fill="#ff4340"/></svg>
    <span class="app br">Br</span>
    <div class="task chrome">
      <svg viewBox="0 0 24 24"><circle cx="12" cy="12" r="12" fill="#34a853"/><path d="M12 12L1.600 6A12 12 0 0 1 22.400 6z" fill="#ea4335"/><path d="M12 12l10.400-6A12 12 0 0 1 12 24z" fill="#fbbc04"/><path d="M12 6.500h10.700C20 1.500 15 0 12 0 7 0 3.500 2.500 1.600 6l5.600 9z" fill="#ea4335"/><path d="M12 24l5-9V6.500h5.700A12 12 0 0 1 12 24z" fill="#fbbc04"/><circle cx="12" cy="12" r="5.800" fill="#fff"/><circle cx="12" cy="12" r="4.500" fill="#4285f4"/></svg>Μεταφράσεις • ola...
    </div>
    <div class="task lr"><span class="app">Lrc</span>Lightroom Catalog ...</div>
    <div class="task ps"><span class="app">Ps</span>sample-3.jpg @ 10...</div>
    <div class="task cc"><span class="app rainbow"><svg viewBox="0 0 20 20"><path d="M5 13a4 4 0 0 1 0-7 5 5 0 0 1 9 1 4 4 0 0 1 1 7H9l-3-4M8 10l3 3M15 10a2 2 0 0 0-4 0" fill="none" stroke="#fff" stroke-width="1.700"/></svg></span>Creative Cloud Des...</div>

    <div class="tray">
      <svg viewBox="0 0 16 16"><rect width="16" height="16" rx="2.500" fill="#fff"/><path d="M6 3h4l4 7h-4z" fill="#fbbc04"/><path d="M6 3l2 3.500L4 13l-2-3z" fill="#34a853"/><path d="M6 10h8l-2 3H4z" fill="#4285f4"/></svg>
      <svg viewBox="0 0 16 16"><path d="M2 4h12v8H2z" fill="#fff"/><path d="M3.500 6h3v3h-3zM8 5.500h4.500v4H8z" fill="#1c2c40"/></svg>
      <svg viewBox="0 0 16 16"><path d="M7 11a3 3 0 1 1 0-6c4-2 8 1 7 5M5 8a2 2 0 0 1 4 0" fill="none" stroke="#b9b9b9" stroke-width="1.600"/><circle cx="11" cy="10" r="3.500" fill="#f4511e"/></svg>
      <svg viewBox="0 0 16 16"><circle cx="8" cy="8" r="7.500" fill="none" stroke="#b01f2c"/><circle cx="8" cy="8" r="5.500" fill="#c8141e"/></svg>
      <svg viewBox="0 0 16 16"><path d="M2 3l6-2 7 4-1 8-5 1-7-6z" fill="#c9c9c9" stroke="#555"/><path d="M5 3l3 3 5-1M9 7v5" stroke="#444" fill="none"/><path d="M0 13l7-5 1 2-6 5z" fill="#ffe600"/><path d="M0 12l5-4 1 1-5 4z" fill="#e53935"/><path d="M3 15l5-4v2l-3 2z" fill="#1e88e5"/></svg>
      <svg viewBox="0 0 16 16"><path d="M4.500.5h5v4h-5zM3 4.500h8V10M3 4.500v11h6M6 2v1M8 2v1M10 13l2 2 4-5" fill="none" stroke="#fff" stroke-width="1.100"/></svg>
      <svg viewBox="0 0 16 16"><path d="M8 0l7 2v5c0 5-3 7-7 9-4-2-7-4-7-9V2z" fill="#fff"/><path d="M8 2v12M2 8h12" stroke="#1b2942" stroke-width="1.200"/><path d="M11.500 6.500l4.500 9H7z" fill="#fdb913"/><path d="M11.500 9.500v3M11.500 13.300v1.200" stroke="#222" stroke-width="1.200"/></svg>
      <svg viewBox="0 0 16 16"><path d="M5.500 3.500h10v7.500H5M10 11v3.500M6.500 14.500h7M.5 1.500h4v4h-4zM2.500 5.500v8h3" fill="none" stroke="#fff" stroke-width="1.100"/></svg>
      <svg viewBox="0 0 16 16"><path d="M.5 6h2.500l3-3.500v11L3 10H.5zM8 6a3 3 0 0 1 0 4M10.500 4a6 6 0 0 1 0 8M13 2.500a9 9 0 0 1 0 11" fill="none" stroke="#fff" stroke-width="1.100"/></svg>
      <svg viewBox="0 0 16 16"><path d="M15 7V1L1 3v11h7M1 3h12M5 10V9a3 3 0 0 1 5-2V5M10 8v1a3 3 0 0 1-4 2" fill="none" stroke="#fff" stroke-width="1.100"/><circle cx="12.500" cy="12.500" r="3.400" fill="#ff9800"/></svg>
    </div>
    <span class="lang">ENG</span>
    <span class="clock">12:19 PM<br>8/10/2023</span>
    <svg class="action" viewBox="0 0 16 16"><path d="M0 0h16v13h-5.500L8 16l-2.500-3H0z" fill="#fff"/><path d="M3 4h10M3 7h10M3 10h6" stroke="#1b2942" stroke-width="1.200"/></svg>
    <i class="peek"></i>
  </div>
</body>
</html>
```
FILE: styles.css
```css
:root {
  --accent: #25b9d7;
  --side: #363a41;
  --muted: #6c868e;
  --text: #363a41;
}
* {
  box-sizing: border-box;
}
body {
  margin: 0;
  width: 1920px;
  height: 1080px;
  overflow: hidden;
  display: flex;
  flex-direction: column;
  position: relative;
  background: #fff;
  font-family: "Open Sans", "Noto Sans", sans-serif;
  font-size: 14px;
  color: var(--text);
}
svg {
  display: block;
  flex: none;
}
.sprite {
  position: absolute;
}
h1, h2, h3, h4, p, ul {
  margin: 0;
  padding: 0;
}
i, em {
  font-style: normal;
}

/* tabs */
.tabstrip {
  display: flex;
  height: 34px;
  flex: none;
  background: #dee1e6;
  padding-left: 9.5px;
  font-size: 12px;
  letter-spacing: -0.3px;
}
.tab {
  width: 86.4px;
  flex: none;
  height: 34px;
  display: flex;
  align-items: center;
  padding-left: 11px;
  position: relative;
  color: #3c4043;
}
.tab::after {
  content: "";
  position: absolute;
  right: 0;
  top: 8px;
  width: 1px;
  height: 19px;
  background: #80868b;
}
.tab.no-sep::after,
.tab.active::after {
  display: none;
}
.tab.active {
  background: #fff;
  border-radius: 8px 8px 0 0;
}
.fav {
  width: 16px;
  height: 16px;
}
.fav-count {
  position: absolute;
  left: 14px;
  top: 14px;
  width: 14px;
  height: 12px;
  border-radius: 6px;
  background: #df0067;
  color: #fff;
  font-size: 9px;
  font-weight: 700;
  line-height: 12px;
  text-align: center;
}
.tab span {
  width: 24px;
  margin-left: 8px;
  overflow: hidden;
  white-space: nowrap;
  -webkit-mask-image: linear-gradient(90deg, #000 60%, transparent);
}
.tab b {
  width: 9px;
  height: 9px;
  margin-left: 8px;
  background:
    linear-gradient(45deg, transparent 43%, #3c4043 43%, #3c4043 57%, transparent 57%),
    linear-gradient(-45deg, transparent 43%, #3c4043 43%, #3c4043 57%, transparent 57%);
}
.new-tab {
  width: 12px;
  height: 12px;
  margin: 11px 0 0 16px;
}
.win-controls {
  display: flex;
  gap: 34px;
  margin: 8px 17px 0 auto;
}
.win-controls svg {
  width: 12px;
  height: 12px;
}
.recorder {
  position: absolute;
  left: 1678px;
  top: 0;
  width: 100px;
  height: 20px;
  border-radius: 0 0 3px 3px;
  background: #202020;
  display: flex;
  align-items: center;
  gap: 5px;
  padding: 0 0 2px 2px;
}
.recorder svg {
  width: 16px;
  height: 16px;
}
.recorder .grip {
  width: 8px;
}

/* toolbar */
.toolbar {
  display: flex;
  align-items: center;
  height: 36px;
  flex: none;
  padding-left: 14px;
  background: #fff;
}
.nav-btns {
  display: flex;
  gap: 16px;
  width: 94px;
}
.nav-btns svg {
  width: 16px;
  height: 16px;
}
.omnibox {
  width: 1563px;
  height: 28px;
  border-radius: 14px;
  background: #f1f3f4;
  display: flex;
  align-items: center;
  padding: 0 10px 0 13px;
}
.lock {
  width: 10px;
  height: 14px;
}
.url {
  flex: 1;
  margin-left: 11px;
  font-size: 13.5px;
  letter-spacing: 0;
  color: #5f6368;
  white-space: nowrap;
}
.url em {
  color: #202124;
}
.omni-ic {
  width: 16px;
  height: 16px;
  margin-left: 16px;
}
.tool-icons {
  display: flex;
  gap: 16px;
  margin-left: 14px;
}
.tool-icons svg {
  width: 16px;
  height: 16px;
}
.avatar {
  width: 22px;
  height: 22px;
  margin-left: 13px;
  border-radius: 50%;
  background: #bf360c;
  color: #fff;
  font-size: 11px;
  line-height: 22px;
  text-align: center;
}
.update-pill {
  width: 105px;
  height: 28px;
  margin-left: 7px;
  border: 1px solid #c5221f;
  border-radius: 14px;
  background: #fceeec;
  color: #c5221f;
  font-size: 12px;
  letter-spacing: -0.3px;
  display: flex;
  align-items: center;
  justify-content: space-between;
  padding: 0 11px 0 12px;
}
.update-pill svg {
  width: 4px;
  height: 14px;
}

/* bookmarks */
.bookmarks {
  display: grid;
  grid-template-columns: 104px 71px 86px 84px 153px 149px 149px 147px 113px 149px 150px 150px 149px 223px 12px;
  align-items: center;
  height: 33px;
  flex: none;
  padding: 0 0 5px 14px;
  border-bottom: 1px solid #d3d5d7;
  font-size: 12px;
  letter-spacing: -0.3px;
  color: #3c4043;
}
.bookmarks a {
  display: flex;
  align-items: center;
  gap: 8px;
  white-space: nowrap;
}
.more {
  font-size: 16px;
}

.viewport {
  display: flex;
  height: 937px;
  flex: none;
  overflow: hidden;
}
.page {
  width: 1903px;
}

/* scrollbars */
.scroll {
  width: 17px;
  height: 937px;
  background: #f1f1f1;
  display: flex;
  flex-direction: column;
  align-items: center;
}
.scroll .thumb {
  width: 13px;
  height: 260px;
  margin-top: 61px;
  background: #c1c1c1;
}
.scroll .up {
  margin-top: 7px;
  border: 4px solid transparent;
  border-top: 0;
  border-bottom-color: #505050;
}
.scroll .down {
  margin: auto 0 7px;
  border: 4px solid transparent;
  border-bottom: 0;
  border-top-color: #505050;
}

/* admin header */
.ps-header {
  height: 40px;
  display: flex;
  align-items: center;
  padding-left: 21px;
  background: #fff;
}
.ps-logo {
  width: 24px;
  height: 24px;
}
.ps-name {
  width: 123px;
  margin-left: 5px;
  font-family: Lato, sans-serif;
  font-weight: 700;
  font-size: 23.5px;
  line-height: 30px;
  letter-spacing: 0.050px;
  color: #251b5b;
}
.ps-name em {
  color: #df0067;
}
.ps-version {
  width: 49px;
  margin: 4px 0 0 7px;
  font-size: 10.5px;
  color: var(--muted);
}
.quick {
  width: 167px;
  display: flex;
  align-items: center;
  gap: 4px;
  margin-top: -1px;
  white-space: nowrap;
  letter-spacing: -0.050px;
  color: #576c72;
}
.quick::after {
  content: "";
  border: 4px solid transparent;
  border-top: 5px solid #576c72;
  border-bottom: 0;
}
.search {
  width: 250px;
  height: 34px;
  margin-top: 2px;
  border: 1px solid #bbcdd2;
  border-radius: 17px;
  display: flex;
  align-items: center;
  padding-left: 10px;
  gap: 14px;
  font-size: 12px;
  font-style: italic;
  color: var(--muted);
}
.search svg {
  width: 15px;
  height: 15px;
}
.header-right {
  display: flex;
  align-items: center;
  margin-left: auto;
  padding-right: 12px;
  fill: var(--muted);
  color: #576c72;
  font-size: 13px;
}
.header-right span {
  white-space: nowrap;
}
.wrench {
  width: 20px;
  height: 20px;
  margin-right: 8px;
  fill: #72c279;
}
.debug {
  width: 168px;
}
.eye {
  width: 20px;
  height: 20px;
  margin-right: 8px;
}
.view-shop {
  width: 191px;
}
.notif {
  width: 20px;
  height: 20px;
  margin-right: 22px;
  position: relative;
}
.notif svg {
  width: 20px;
  height: 20px;
}
.notif b {
  position: absolute;
  left: 5px;
  top: -3px;
  width: 17px;
  height: 13px;
  border-radius: 7px;
  background: #f54c3e;
  color: #fff;
  font-size: 10px;
  line-height: 13px;
  text-align: center;
}
.account {
  width: 22px;
  height: 22px;
}
.ps-body {
  display: flex;
  height: 897px;
}

/* sidebar */
.sidebar {
  width: 210px;
  background: var(--side);
  fill: #fff;
  color: #fff;
  font-size: 12px;
  font-weight: 600;
}
.collapse {
  height: 43px;
  padding: 16px 0 0 176px;
}
.collapse svg {
  width: 14px;
  height: 10px;
}
.item {
  display: flex;
  align-items: center;
  height: 32px;
  padding-left: 14px;
  letter-spacing: -0.3px;
}
.item svg {
  width: 20px;
  height: 20px;
  margin-right: 10px;
}
.sidebar h4 {
  height: 52px;
  padding: 26px 0 0 15px;
  line-height: 18px;
  font-size: 12px;
  font-weight: 700;
  color: #8ba2a8;
  letter-spacing: -0.2px;
}
.sidebar .first + h4 {
  height: 53px;
  padding-top: 27px;
}
.open {
  height: 146px;
  background: #202226;
}
.current {
  border-left: 4px solid var(--accent);
  padding-left: 10px;
}
.current > svg:first-child {
  fill: var(--accent);
}
.item .chev {
  width: 12px;
  height: 8px;
  margin: 0 8px 0 auto;
}
.open ul {
  list-style: none;
  padding: 4px 0 0 44px;
  font-weight: 400;
  color: #a8bcc2;
}
.open li {
  height: 24.400px;
  line-height: 24px;
}
.open .on {
  color: #fff;
  font-weight: 600;
  letter-spacing: -0.3px;
}
.two {
  height: 48px;
  line-height: 16px;
  align-items: flex-end;
}
.two span {
  padding-bottom: 8px;
}
.two svg {
  margin-bottom: 6px;
}

/* main */
.main {
  width: 1693px;
  background: #eff1f2;
}
.page-head {
  height: 86px;
  display: flex;
  justify-content: space-between;
  background: #fff;
  border-bottom: 1px solid #d3d8db;
  padding: 5px 15px 0;
}
.crumbs {
  font-size: 12px;
  line-height: 18px;
  letter-spacing: -0.1px;
}
.crumbs span {
  color: #8a8f94;
}
.crumbs i {
  margin: 0 12px 0 9px;
  color: var(--muted);
}
.page-head h1 {
  font-size: 27.5px;
  font-weight: 400;
  line-height: 38px;
  margin-top: 6px;
  letter-spacing: -0.45px;
}
.help {
  width: 90px;
  height: 39px;
  margin-top: 23px;
  background: #fff;
  border: 1px solid var(--muted);
  border-radius: 4px;
  font: 600 14px "Open Sans", sans-serif;
  color: var(--muted);
}
.content {
  padding: 0 11px 0 16px;
}
.prev-card {
  height: 7px;
  background: #fff;
  border-radius: 0 0 5px 5px;
  box-shadow: 0 0 4px rgba(37, 100, 120, .15), 0 1px 0 #dbe6e9;
}
.card {
  margin-top: 22px;
  background: #fff;
  box-shadow: 0 0 4px rgba(37, 100, 120, .15), 0 0 0 1px #dbe6e9;
}
.card-head {
  display: flex;
  align-items: center;
  height: 45px;
  padding: 0 0 1px 10px;
  background: #fafbfc;
  border-bottom: 1px solid #dbe6e9;
  color: #484848;
}
.env {
  width: 14px;
  height: 12px;
  margin-top: 3px;
}
.card-title {
  width: 118px;
  margin-left: 5px;
  font-size: 16px;
  font-weight: 600;
  letter-spacing: -0.1px;
  white-space: nowrap;
}
.path {
  width: 130px;
  height: 23px;
  border: 1px solid #d6d6d6;
  border-radius: 12px;
  background: #fff;
  display: flex;
  align-items: center;
  gap: 6px;
  padding-left: 10px;
  font-size: 18px;
  font-weight: 700;
  letter-spacing: 1px;
}
.path svg {
  width: 14px;
  height: 12px;
}
.card-body {
  padding: 12px 20px 0;
}
.mail-row {
  height: 29px;
  display: flex;
}
.count {
  width: 44px;
  height: 16px;
  margin-top: 5px;
  border-radius: 8px;
  background: var(--accent);
  color: #fff;
  font-size: 12px;
  font-weight: 600;
  line-height: 16px;
  display: flex;
  align-items: center;
  gap: 4px;
  padding-left: 5px;
  letter-spacing: .5px;
}
.count svg {
  width: 14px;
  height: 12px;
}
.mail-row a {
  margin-left: 4px;
  font-size: 15px;
  line-height: 22px;
  color: var(--accent);
}
.missing {
  width: 206px;
  height: 15px;
  margin: 4px 0 0 auto;
  border-radius: 8px;
  background: #72c279;
  color: #fff;
  font-size: 12px;
  font-weight: 600;
  line-height: 14px;
  letter-spacing: .5px;
  text-align: center;
  white-space: nowrap;
}
.panel {
  margin-left: 20px;
  border: 1px solid #d6d6d6;
  border-radius: 5px;
  padding: 0 12px;
  height: 720px;
}
.mail-name {
  height: 46px;
  line-height: 35px;
  border-bottom: 1px solid #eee;
  color: #484848;
}
.alert {
  display: flex;
  align-items: center;
  height: 54px;
  margin: 17px 0;
  border: 1px solid var(--accent);
  border-radius: 8px;
  background: #beeaf3;
  padding: 0 0 1px 15px;
}
.q {
  width: 21px;
  height: 21px;
  margin-right: 20px;
  border-radius: 50%;
  background: var(--accent);
  color: #beeaf3;
  font-size: 17px;
  font-weight: 800;
  line-height: 21px;
  text-align: center;
}
.pills {
  display: flex;
  border-top: 1px solid #eee;
  padding-top: 17px;
  height: 60px;
  font-size: 12px;
}
.pills a {
  height: 37px;
  padding: 0 15px;
  margin-right: 2px;
  line-height: 37px;
  border-radius: 4px;
  color: var(--accent);
}
.pills .on {
  background: var(--accent);
  color: #fff;
}
.frame-wrap {
  border: 1px solid #ccc;
  border-radius: 4px;
  padding: 4px;
}
.frame {
  display: flex;
  border: 2px solid #ededed;
  border-top-color: #9a9a9a;
  border-left-color: #9a9a9a;
  height: 540px;
}
.inner {
  height: 494px;
}
.inner .thumb {
  height: 332px;
  margin-top: 6px;
}
.inner .up {
  border-bottom-color: #a3a3a3;
}
.inner .down {
  margin-bottom: 5px;
}

/* email preview */
.email-bg {
  flex: 1;
  background: #eee;
  padding: 40px 0 0 473px;
}
.email {
  width: 604px;
  height: 500px;
  padding: 55px 50px 0 49.5px;
  background: #fff;
  border-radius: 4px;
  box-shadow: 0 10px 40px rgba(0, 0, 0, .12);
}
.broken {
  width: 16px;
  height: 16px;
  margin-left: 177px;
}
.email h2 {
  margin-top: 54px;
  font-size: 20px;
  font-weight: 600;
  line-height: 28px;
}
.dash {
  width: 25px;
  height: 3px;
  margin-top: 18px;
  background: #4a4e54;
}
.email h3 {
  margin-top: 50px;
  font-size: 16px;
  font-weight: 600;
  line-height: 24px;
}
.box {
  height: 137px;
  margin-top: 16px;
  padding: 20px 25px;
  border: 1px solid #ddd;
  background: #fefefe;
  line-height: 25px;
}
.box p {
  margin-bottom: 20px;
  white-space: nowrap;
}
.guest {
  margin-top: 40px;
  line-height: 25px;
  white-space: nowrap;
}
.guest a {
  font-weight: 600;
  color: var(--accent);
}

/* taskbar */
.taskbar {
  display: flex;
  align-items: center;
  height: 40px;
  flex: none;
  position: relative;
  z-index: 1;
  background: linear-gradient(90deg, #233a42 0, #21363f 55%, #1c2c40 72%, #1b2845);
  color: #fff;
  font-size: 12px;
  letter-spacing: -0.3px;
}
.start {
  width: 16px;
  height: 16px;
  margin-left: 16px;
}
.find {
  width: 24px;
  height: 24px;
  margin-left: 28px;
}
.edge {
  width: 24px;
  height: 24px;
  margin: 0 17px 0 27px;
}
.task {
  width: 152px;
  height: 40px;
  margin-right: 9px;
  border-bottom: 2px solid #76b9ed;
  display: flex;
  align-items: center;
  gap: 5px;
  padding: 1px 0 0 7px;
  white-space: nowrap;
}
.dl {
  margin-right: 8px;
  padding-left: 8px;
}
.dl svg,
.fold svg {
  width: 20px;
  height: 20px;
}
.fold {
  margin-right: 17px;
  gap: 7px;
}
.firefox {
  width: 24px;
  height: 24px;
  margin-right: 26px;
}
.app {
  width: 22px;
  height: 21px;
  border-radius: 4px;
  background: #001d34;
  color: #31a8ff;
  font-size: 12px;
  font-weight: 700;
  line-height: 20px;
  text-align: center;
}
.br {
  margin-right: 14px;
  background: #000b1d;
  color: #fff;
}
.rainbow {
  background: conic-gradient(from 45deg, #ff9500, #7ad13c, #2aa7e8, #7b4dff, #ff2d87, #ff1a1a, #ff9500);
}
.rainbow svg {
  width: 20px;
  height: 20px;
  margin-left: 1px;
}
.chrome {
  width: 160px;
  margin-right: 5px;
  background: #4d6068;
  padding-left: 10px;
  gap: 4px;
  letter-spacing: -0.2px;
}
.chrome svg {
  width: 24px;
  height: 24px;
}
.tray {
  display: flex;
  gap: 8px;
  margin-left: auto;
  width: 242px;
}
.tray svg {
  width: 16px;
  height: 16px;
}
.lang {
  width: 33px;
}
.clock {
  width: 60px;
  text-align: center;
  line-height: 18px;
}
.action {
  width: 16px;
  height: 16px;
  margin: 0 20px 0 13px;
}
.peek {
  width: 5px;
  height: 40px;
  border-left: 1px solid #5b6678;
}
```
